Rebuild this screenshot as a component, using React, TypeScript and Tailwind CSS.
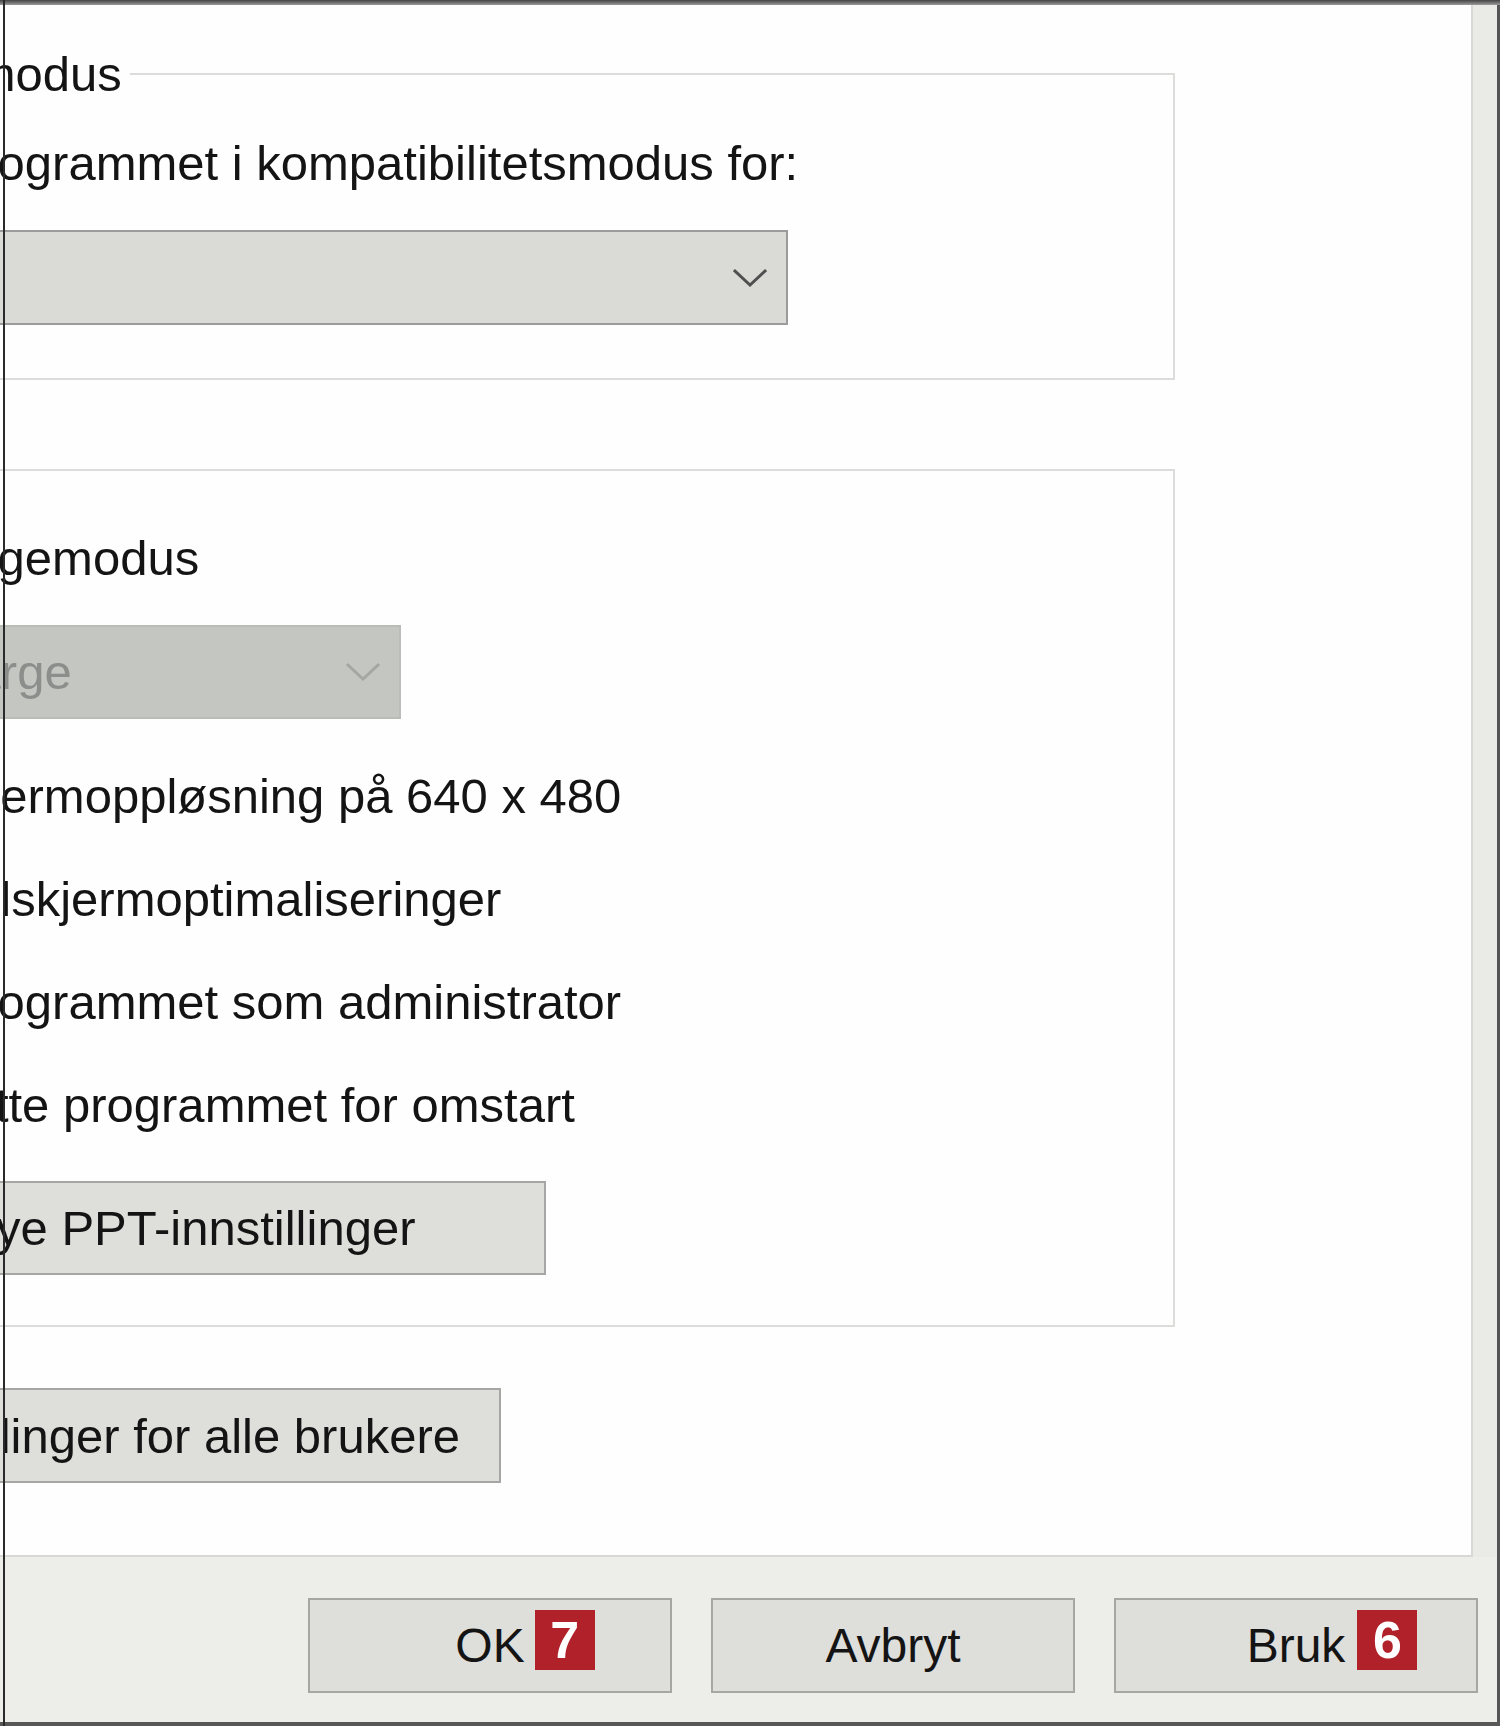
import type { ReactNode } from 'react';

// Egenskaper → Kompatibilitet, utsnitt av høyre del av dialogen

function Chevron({ color }: { color: string }) {
  return (
    <svg width="34" height="20" viewBox="0 0 34 20" fill="none">
      <polyline points="2,3 17,17 32,3" stroke={color} strokeWidth="3" strokeLinecap="square" />
    </svg>
  );
}

function CheckRow({ label, className = '' }: { label: string; className?: string }) {
  return (
    <div className={`flex items-center h-[56px] pl-[34px] gap-[18px] ${className}`}>
      <span className="w-[50px] h-[50px] shrink-0 border-2 border-[#333333] bg-white" />
      <span className="leading-[56px] text-[49px] whitespace-nowrap">{label}</span>
    </div>
  );
}

function Badge({ n, className = '' }: { n: number; className?: string }) {
  return (
    <span
      className={`absolute left-full top-[-8px] w-[60px] h-[60px] flex items-center justify-center bg-[#b1212a] text-white font-bold text-[52px] leading-none ${className}`}
    >
      {n}
    </span>
  );
}

function DialogButton({ children, badge }: { children: ReactNode; badge?: ReactNode }) {
  return (
    <button className="w-[364px] h-[95px] border-2 border-[#a6a6a4] bg-[#dededb] flex items-center justify-center">
      <span className="relative leading-[56px] text-[48px]">
        {children}
        {badge}
      </span>
    </button>
  );
}

function CompatTab() {
  return (
    <div className="ml-[-376px] pt-[41px] flex flex-col items-start">
      {/* ── Kompatibilitetsmodus ─────────────────────────────────── */}
      <fieldset className="w-[1551px] border-2 border-[#dcdcdb] pb-[53px]">
        <legend className="ml-[24px] pl-[6px] pr-[8px] leading-[56px] text-[49px] whitespace-nowrap">
          Kompatibilitetsmodus
        </legend>
        <CheckRow className="mt-[33px]" label="Kjør dette programmet i kompatibilitetsmodus for:" />
        <div className="mt-[39px] ml-[28px] w-[1134px] h-[95px] border-2 border-[#9b9b9b] bg-[#dadad6] flex items-center justify-between pl-[10px] pr-[19px]">
          <span className="leading-[56px] text-[49px] whitespace-nowrap">Windows 8</span>
          <Chevron color="#4f4f4f" />
        </div>
      </fieldset>

      {/* ── Innstillinger ─────────────────────────────────────────── */}
      <fieldset className="mt-[62px] w-[1551px] border-2 border-[#dcdcdb] pb-[50px]">
        <legend className="ml-[24px] pl-[6px] pr-[8px] leading-[56px] text-[49px] whitespace-nowrap">
          Innstillinger
        </legend>
        <CheckRow className="mt-[32px]" label="Redusert fargemodus" />
        <div className="mt-[39px] ml-[17px] w-[758px] h-[94px] border-2 border-[#babcb8] bg-[#c4c6c2] flex items-center justify-between pl-[10px] pr-[19px]">
          <span className="leading-[56px] text-[49px] whitespace-nowrap text-[#8c8e8b]">8-biters (256) farge</span>
          <Chevron color="#a5a7a3" />
        </div>
        <div className="mt-[49px] flex flex-col gap-[47px]">
          <CheckRow label="Kjør med skjermoppløsning på 640 x 480" />
          <CheckRow label="Deaktiver fullskjermoptimaliseringer" />
          <CheckRow label="Kjør dette programmet som administrator" />
          <CheckRow label="Registrer dette programmet for omstart" />
        </div>
        <button className="mt-[48px] ml-[38px] w-[882px] h-[94px] border-2 border-[#a6a6a4] bg-[#dededb] flex items-center justify-center">
          <span className="leading-[56px] text-[49px] whitespace-nowrap">Endre høye PPT-innstillinger</span>
        </button>
      </fieldset>

      <button className="mt-[61px] ml-[65px] w-[812px] h-[95px] border-2 border-[#a6a6a4] bg-[#dededb] flex items-center justify-center">
        <span className="leading-[56px] text-[49px] whitespace-nowrap">Endre innstillinger for alle brukere</span>
      </button>
    </div>
  );
}

export default function App() {
  return (
    <div className="relative w-[1500px] h-[1726px] overflow-hidden flex flex-col bg-[#ededea] font-['Liberation_Sans',Arial,sans-serif] text-[#141414]">
      <div className="h-[5px] shrink-0 bg-gradient-to-b from-[#444444] to-[#9c9c9c]" />

      <div className="flex flex-1 min-h-0">
        <div className="flex-1 flex flex-col">
          <div className="flex">
            <div className="w-[1473px] h-[1552px] shrink-0 overflow-hidden bg-[#fefefe] border-r-2 border-b-2 border-[#d8d8d5]">
              <CompatTab />
            </div>
            <div className="flex-1 bg-[#eaeae7]" />
          </div>

          {/* ── Knapper nederst ─────────────────────────────────────── */}
          <div className="flex-1 flex justify-end items-start gap-[39px] pt-[41px] pr-[19px]">
            <DialogButton badge={<Badge n={7} className="ml-[10px]" />}>OK</DialogButton>
            <DialogButton>Avbryt</DialogButton>
            <DialogButton badge={<Badge n={6} className="ml-[12px]" />}>Bruk</DialogButton>
          </div>
        </div>
        <div className="w-[3px] shrink-0 bg-[#555555]" />
      </div>

      <div className="h-[4px] shrink-0 bg-[#575757]" />

      <div className="absolute left-[3px] top-0 bottom-0 w-[2px] bg-[#2a2a2a]" />
    </div>
  );
}
